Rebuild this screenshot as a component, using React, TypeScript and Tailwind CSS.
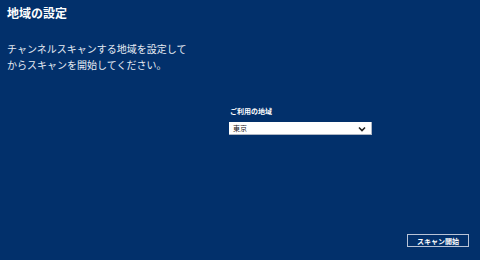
export default function App() {
  return (
    <div
      className="w-[480px] h-[260px] bg-[#02306b] text-white flex flex-col overflow-hidden"
      style={{ fontFamily: '"Noto Sans CJK JP", "Noto Sans", sans-serif' }}
    >
      {/* タイトル */}
      <h1 className="pl-[7px] pt-[5px] text-[12px] leading-[16px] font-bold">地域の設定</h1>

      {/* 説明 */}
      <p className="pl-[7px] mt-[20px] text-[10px] leading-[16px] tracking-[0px] text-[#e6ebf3]">
        チャンネルスキャンする地域を設定して
        <br />
        からスキャンを開始してください。
      </p>

      {/* 地域選択 */}
      <div className="ml-[229px] mt-[33px] w-[143px] flex flex-col">
        <label className="pl-[1px] text-[7px] leading-[10px] font-bold">ご利用の地域</label>
        <div className="mt-[6px] h-[13px] bg-white border-r border-b border-[#aeb6c4] flex items-center justify-between pl-[4px] pr-[5px]">
          <span className="text-[7px] leading-[10px] text-[#222]">東京</span>
          <svg width="8" height="6" viewBox="0 0 8 6" className="mt-[1px]">
            <path d="M1 1.5 L4 4.5 L7 1.5" fill="none" stroke="#222" strokeWidth="1.6" />
          </svg>
        </div>
      </div>

      {/* ボタン */}
      <div className="mt-auto mb-[13px] mr-[11px] flex justify-end">
        <button className="w-[62px] h-[13px] border border-[#b9c3d6] flex items-center justify-center text-[7px] leading-[10px] font-bold text-white">
          スキャン開始
        </button>
      </div>
    </div>
  );
}
